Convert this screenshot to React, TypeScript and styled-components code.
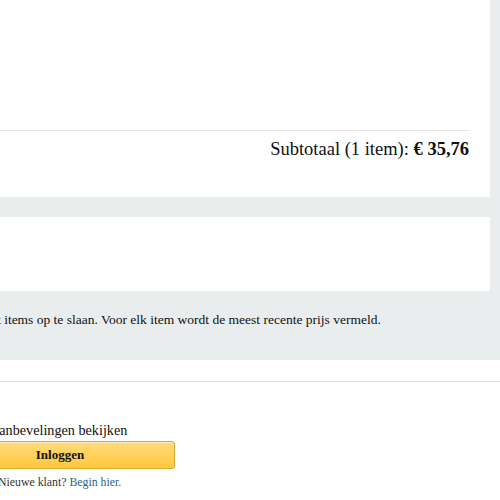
import React from "react";
import styled, { createGlobalStyle } from "styled-components";

const GlobalStyle = createGlobalStyle`
  html, body {
    margin: 0;
    padding: 0;
    background: #ffffff;
  }
  body {
    font-family: "Liberation Serif", "DejaVu Serif", serif;
    color: #0f1111;
  }
`;

const Page = styled.div`
  width: 500px;
  height: 500px;
  overflow: hidden;
  background: #eaeded;
  display: flex;
  flex-direction: column;
`;

const CartArea = styled.div`
  display: flex;
  flex-direction: column;
  gap: 20px;
  padding-right: 10px;
`;

const Card = styled.section<{ $height: number }>`
  background: #ffffff;
  height: ${(p) => p.$height}px;
  display: flex;
  flex-direction: column;
`;

const ItemSpace = styled.div`
  height: 130px;
  border-bottom: 1px solid #e7e7e7;
  margin-right: 20px;
`;

const Subtotal = styled.div`
  text-align: right;
  padding: 6px 21px 0 0;
  font-size: 18.5px;
  line-height: 24px;
  white-space: nowrap;

  b {
    font-weight: 700;
  }
`;

const Note = styled.p`
  margin: 0 0 0 -3px;
  height: 69px;
  padding-top: 21px;
  box-sizing: border-box;
  font-size: 13.5px;
  line-height: 16px;
  white-space: nowrap;
`;

const Footer = styled.footer`
  flex: 1;
  background: #ffffff;
  padding-top: 21px;
`;

const Rule = styled.hr`
  margin: 0;
  border: 0;
  border-top: 1px solid #dddddd;
`;

const SignIn = styled.div`
  padding-top: 39px;
  display: flex;
  flex-direction: column;
  align-items: flex-start;
`;

const Prompt = styled.div`
  margin-left: -7px;
  font-size: 14.2px;
  line-height: 18px;
  white-space: nowrap;
`;

const Button = styled.button`
  margin: 2px 0 0 -55px;
  width: 230px;
  height: 28px;
  border: 1px solid #dca92f;
  border-radius: 3px;
  background: linear-gradient(to bottom, #ffdb7d, #ffc73c);
  box-shadow: inset 0 1px 0 rgba(255, 255, 255, 0.5);
  font-family: inherit;
  font-size: 13px;
  font-weight: 700;
  color: #111111;
  padding: 0;
  cursor: pointer;
`;

const NewCustomer = styled.div`
  margin: 6px 0 0 -2px;
  font-size: 11.8px;
  line-height: 14px;
  color: #333333;
  white-space: nowrap;

  a {
    color: #2d5f8a;
    text-decoration: none;
  }
`;

export default function App() {
  return (
    <>
      <GlobalStyle />
      <Page>
        <CartArea>
          <Card $height={197}>
            <ItemSpace />
            <Subtotal>
              Subtotaal (1 item): <b>€ 35,76</b>
            </Subtotal>
          </Card>
          <Card $height={74} />
        </CartArea>
        <Note>
          t items op te slaan. Voor elk item wordt de meest recente prijs vermeld.
        </Note>
        <Footer>
          <Rule />
          <SignIn>
            <Prompt>aanbevelingen bekijken</Prompt>
            <Button type="button">Inloggen</Button>
            <NewCustomer>
              Nieuwe klant? <a href="#">Begin hier.</a>
            </NewCustomer>
          </SignIn>
        </Footer>
      </Page>
    </>
  );
}
